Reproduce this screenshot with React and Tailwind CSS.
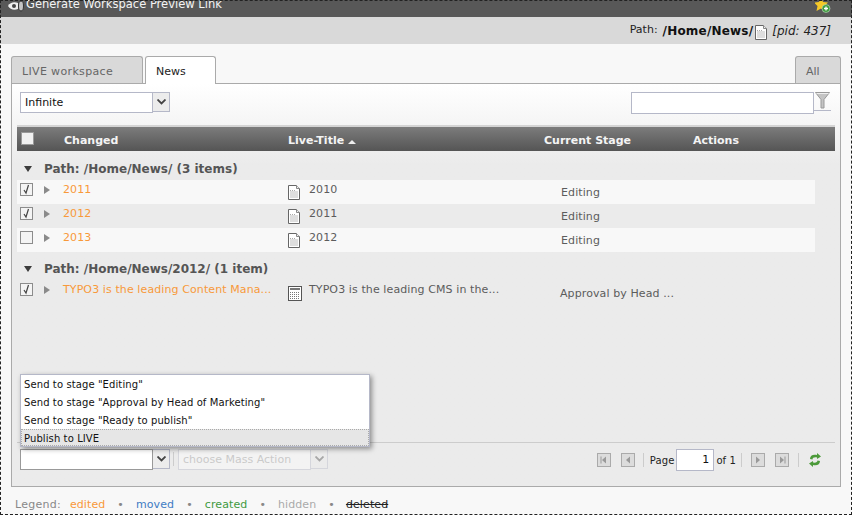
import React from "react";

const DocIcon = () => (
  <svg width="12" height="15" viewBox="0 0 12 15" className="block">
    <path d="M0.5 0.5H8.5L11.5 3.5V14.5H0.5Z" fill="#fff" stroke="#666" />
    <path d="M8.5 0.5V3.5H11.5" fill="#eee" stroke="#888" />
    <rect x="2" y="6" width="8" height="7" fill="#dedede" />
    <path d="M2 5.5H8" stroke="#aaa" strokeDasharray="1 1" />
  </svg>
);

const NewsIcon = () => (
  <svg width="14" height="15" viewBox="0 0 14 15" className="block">
    <rect x="0.5" y="0.5" width="13" height="14" fill="#fff" stroke="#555" />
    <rect x="2" y="2" width="10" height="2" fill="#777" />
    <path d="M2 6.5H12M2 8.5H12M2 10.5H12M2 12.5H12" stroke="#777" strokeDasharray="1 1" />
  </svg>
);

const Check = ({ checked }) => (
  <span className="flex items-center justify-center w-[13px] h-[13px] border border-[#8c8c8c] bg-[#f4f4f4]">
    {checked && (
      <svg width="9" height="11" viewBox="0 0 9 11">
        <path d="M2 6L4 9L6.5 1" fill="none" stroke="#444" strokeWidth="1.2" />
      </svg>
    )}
  </span>
);

const Arrow = () => (
  <svg width="6" height="8" viewBox="0 0 6 8" className="block">
    <path d="M0 0L6 4L0 8Z" fill="#8a8a8a" />
  </svg>
);

const GroupArrow = () => (
  <svg width="8" height="6" viewBox="0 0 8 6" className="block">
    <path d="M0 0H8L4 6Z" fill="#3c3c3c" />
  </svg>
);

const Combo = ({ text, disabled, dark }) => (
  <div className={`flex ${disabled ? "opacity-40" : ""}`}>
    <div
      className={`w-[133px] h-[21px] border ${dark ? "border-[#999]" : "border-[#b5b8c8]"} bg-white px-[4px] leading-[19px] ${disabled ? "text-[#999]" : "text-[#111]"}`}
    >
      {text}
    </div>
    <div className="w-[17px] h-[20px] border border-l-0 border-[#b5b8c8] bg-[#ececec] flex items-center justify-center">
      <svg width="9" height="6" viewBox="0 0 9 6">
        <path d="M0.5 0.5L4.5 4.5L8.5 0.5" fill="none" stroke="#444" strokeWidth="1.8" />
      </svg>
    </div>
  </div>
);

const PageBtn = ({ dir, bar }) => (
  <span className="flex items-center justify-center w-[14px] h-[14px] border border-[#aaa] bg-[#dcdcdc]">
    <svg width="8" height="8" viewBox="0 0 8 8">
      {dir === "left" ? <path d="M6 0.5V7.5L2 4Z" fill="#999" /> : <path d="M2 0.5V7.5L6 4Z" fill="#999" />}
      {bar && <rect x={dir === "left" ? 0.5 : 6.5} y="0.5" width="1" height="7" fill="#999" />}
    </svg>
  </span>
);

const Sep = () => <span className="block w-px h-[14px] bg-[#ccc]" />;

const Row = ({ checked, title, live, stage, bg, icon, long }) => (
  <div className={`grid grid-cols-[46px_225px_21px_252px_1fr] w-[798px] h-[24px] tracking-[0.1px] ${bg}`}>
    <div className="flex pl-[3px] pt-[3px] gap-[11px]">
      <Check checked={checked} />
      <span className="pt-[3px]">
        <Arrow />
      </span>
    </div>
    <div className="text-[#f8993a] pt-[2px] whitespace-nowrap">{title}</div>
    <div className={long ? "pt-[6px]" : "pt-[5px]"}>{icon}</div>
    <div className="pt-[2px] text-[#5c5c5c] whitespace-nowrap">{live}</div>
    <div className={`${long ? "pt-[6px] -ml-[1px]" : "pt-[5px]"} text-[#5c5c5c] whitespace-nowrap`}>{stage}</div>
  </div>
);

const Group = ({ text, className }) => (
  <div className={`flex items-center h-[14px] pl-[7px] gap-[12px] font-bold text-[12px] text-[#555] whitespace-nowrap ${className}`}>
    <GroupArrow />
    <span>{text}</span>
  </div>
);

export default function App() {
  return (
    <div className="relative w-[852px] h-[515px] overflow-hidden bg-[#f8f8f8] text-[11px] font-['DejaVu_Sans',sans-serif]">
      {/* title bar, cut off at the top */}
      <div className="h-[17px] bg-[#585858] flex justify-between overflow-hidden pl-[8px] pr-[21px]">
        <div className="flex gap-[2px] -mt-[3px]">
          <svg width="16" height="13" viewBox="0 0 16 13" className="mt-[2px]">
            <path d="M0 7C2 3.5 6 2.5 10 4V10C6 11.5 2 10.5 0 7Z" fill="#eee" />
            <circle cx="6" cy="7" r="2" fill="#444" />
            <ellipse cx="13" cy="7" rx="2.5" ry="5" fill="#c4c4c4" stroke="#333" />
          </svg>
          <span className="text-[#f4f4f4] text-[11.5px] leading-[14px] whitespace-nowrap">Generate Workspace Preview Link</span>
        </div>
        <svg width="16" height="14" viewBox="0 0 16 14">
          <path d="M6 -3L8 2L13 2.5L9.5 6L10.5 11L6 8.5L1.5 11L2.5 6L-1 2.5L4 2Z" fill="#f6c928" />
          <circle cx="11" cy="8.5" r="4" fill="#3f9a3f" stroke="#dfeede" strokeWidth="0.5" />
          <path d="M11 6.5V10.5M9 8.5H13" stroke="#fff" strokeWidth="1.3" />
        </svg>
      </div>

      {/* path bar */}
      <div className="h-[27px] bg-[#d9d9d9] flex items-center justify-end pr-[21px] text-[#222] whitespace-nowrap">
        <span className="mr-[5px]">Path:</span>
        <span className="font-bold text-[12px] tracking-[0.2px] text-[#111]">/Home/News/</span>
        <span className="mx-[2px] mt-[3px]">
          <DocIcon />
        </span>
        <span className="italic text-[12px] ml-[3px]">[pid: 437]</span>
      </div>

      {/* tabs */}
      <div className="flex justify-between mx-[11px] mt-[12px] h-[27px] items-end">
        <div className="flex gap-[2px]">
          <div className="w-[132px] h-[27px] bg-[#d9d9d9] border border-b-0 border-[#aaa] rounded-t-[3px] pl-[10px] pt-[7px] tracking-[0.35px] text-[#666]">LIVE workspace</div>
          <div className="relative w-[71px] h-[28px] -mb-px bg-white border border-b-0 border-[#aaa] rounded-t-[3px] pl-[10px] pt-[7px] text-[#222]">News</div>
        </div>
        <div className="w-[46px] h-[27px] bg-[#d9d9d9] border border-b-0 border-[#aaa] rounded-t-[3px] pl-[10px] pt-[7px] text-[#666]">All</div>
      </div>

      {/* panel */}
      <div className="mx-[11px] w-[830px] h-[404px] border border-[#aaa] bg-gradient-to-b from-white to-[#ebebeb] to-[20%] flex flex-col">
        <div className="flex justify-between items-start pl-[8px] pr-[9px] pt-[8px] h-[41px]">
          <Combo text="Infinite" />
          <div className="flex items-start">
            <div className="w-[183px] h-[22px] border border-[#b5b8c8] bg-white" />
            <div className="border-b border-[#b5b8c8] h-[19px] w-[17px] flex justify-center">
              <svg width="15" height="17" viewBox="0 0 15 17">
                <path d="M0.5 0.5H14.5L9 7.5V16H6V7.5Z" fill="#c4c4c4" stroke="#999" />
                <path d="M1.5 1.5H13.5" stroke="#eee" />
              </svg>
            </div>
          </div>
        </div>

        {/* grid header */}
        <div className="mx-[5px] h-[26px] pt-[5px] border-t-2 border-[#d4d4d4] bg-gradient-to-b from-[#7c7c7c] to-[#555] text-[#f4f4f4] font-bold grid grid-cols-[47px_224px_256px_149px_1fr] items-center">
          <span className="ml-[4px] -mt-[6px] w-[13px] h-[13px] bg-[#f0f0f0] border border-[#999]" />
          <span>Changed</span>
          <span className="flex items-center gap-[4px]">
            Live-Title
            <svg width="8" height="4" viewBox="0 0 8 4">
              <path d="M0 4L4 0L8 4Z" fill="#eee" />
            </svg>
          </span>
          <span>Current Stage</span>
          <span>Actions</span>
        </div>

        {/* grid body */}
        <div className="relative flex-1 mx-[5px] flex flex-col">
          <Group text="Path: /Home/News/ (3 items)" className="mt-[11px] mb-[4px]" />
          <Row checked title="2011" live="2010" stage="Editing" bg="bg-[#f8f8f8]" icon={<DocIcon />} />
          <Row checked title="2012" live="2011" stage="Editing" bg="bg-[#ebebeb]" icon={<DocIcon />} />
          <Row title="2013" live="2012" stage="Editing" bg="bg-[#f8f8f8]" icon={<DocIcon />} />
          <Group text="Path: /Home/News/2012/ (1 item)" className="mt-[10px] mb-[4px]" />
          <Row
            checked
            long
            title="TYPO3 is the leading Content Mana..."
            live="TYPO3 is the leading CMS in the..."
            stage="Approval by Head ..."
            icon={<NewsIcon />}
          />

          {/* stage dropdown */}
          <div className="absolute z-10 left-[3px] top-[223px] w-[350px] h-[73px] bg-white border border-[#b5b8c8] shadow-[2px_2px_5px_rgba(0,0,0,0.4)] text-[10px] tracking-[0.1px] text-[#111]">
            <div className="h-[18px] pl-[3px] leading-[19px]">Send to stage "Editing"</div>
            <div className="h-[18px] pl-[3px] leading-[19px]">Send to stage "Approval by Head of Marketing"</div>
            <div className="h-[18px] pl-[3px] leading-[19px]">Send to stage "Ready to publish"</div>
            <div className="h-[17px] pl-[2px] leading-[17px] bg-[#e6e6e6] border border-dotted border-[#aaa]">Publish to LIVE</div>
          </div>
        </div>

        {/* bottom toolbar */}
        <div className="mx-[5px] h-[44px] border-t border-[#ccc] flex justify-between pl-[3px] pr-[14px] pt-[6px]">
          <div className="flex items-start">
            <Combo text="" dark />
            <span className="w-px h-[14px] mt-[3px] ml-[3px] mr-[4px] bg-[#ccc]" />
            <Combo text="choose Mass Action" disabled />
          </div>
          <div className="flex items-center h-[22px] text-[10px] tracking-[0.1px] text-[#222]">
            <PageBtn dir="left" bar />
            <span className="ml-[10px]">
              <PageBtn dir="left" />
            </span>
            <span className="ml-[8px] mr-[6px]">
              <Sep />
            </span>
            <span>Page</span>
            <div className="w-[38px] h-[22px] mx-[2px] border border-[#b5b8c8] bg-white text-right pr-[4px] text-[11px] leading-[20px] text-[#111]">1</div>
            <span>of 1</span>
            <span className="ml-[5px] mr-[9px]">
              <Sep />
            </span>
            <PageBtn dir="right" />
            <span className="ml-[10px]">
              <PageBtn dir="right" bar />
            </span>
            <span className="ml-[9px] mr-[10px]">
              <Sep />
            </span>
            <svg width="12" height="14" viewBox="0 0 12 14">
              <path d="M1 6C1 2.5 4 1 8 2V0L12 3.5L8 6V4.5C5 4 3.5 5 3.5 6.5Z" fill="#4c9a3a" />
              <path d="M11 8C11 11.5 8 13 4 12V14L0 10.5L4 8V9.5C7 10 8.5 9 8.5 7.5Z" fill="#4c9a3a" />
            </svg>
          </div>
        </div>
      </div>

      {/* legend */}
      <div className="flex items-center pl-[15px] pt-[10px] tracking-[0.1px] whitespace-nowrap">
        <span className="text-[#888] tracking-[0.25px]">Legend:</span>
        <span className="ml-[9px] text-[#f8993a]">edited</span>
        <span className="mx-[12px] text-[#888]">•</span>
        <span className="text-[#3f7cc4]">moved</span>
        <span className="mx-[12px] text-[#888]">•</span>
        <span className="text-[#3f9a3f]">created</span>
        <span className="mx-[12px] text-[#888]">•</span>
        <span className="text-[#aaa]">hidden</span>
        <span className="ml-[12px] mr-[11px] text-[#888]">•</span>
        <span className="text-[#222] line-through">deleted</span>
      </div>

      {/* dashed selection frame over the window */}
      <div className="absolute inset-0 pointer-events-none border-[1px] border-dashed border-[#222]" />
    </div>
  );
}
